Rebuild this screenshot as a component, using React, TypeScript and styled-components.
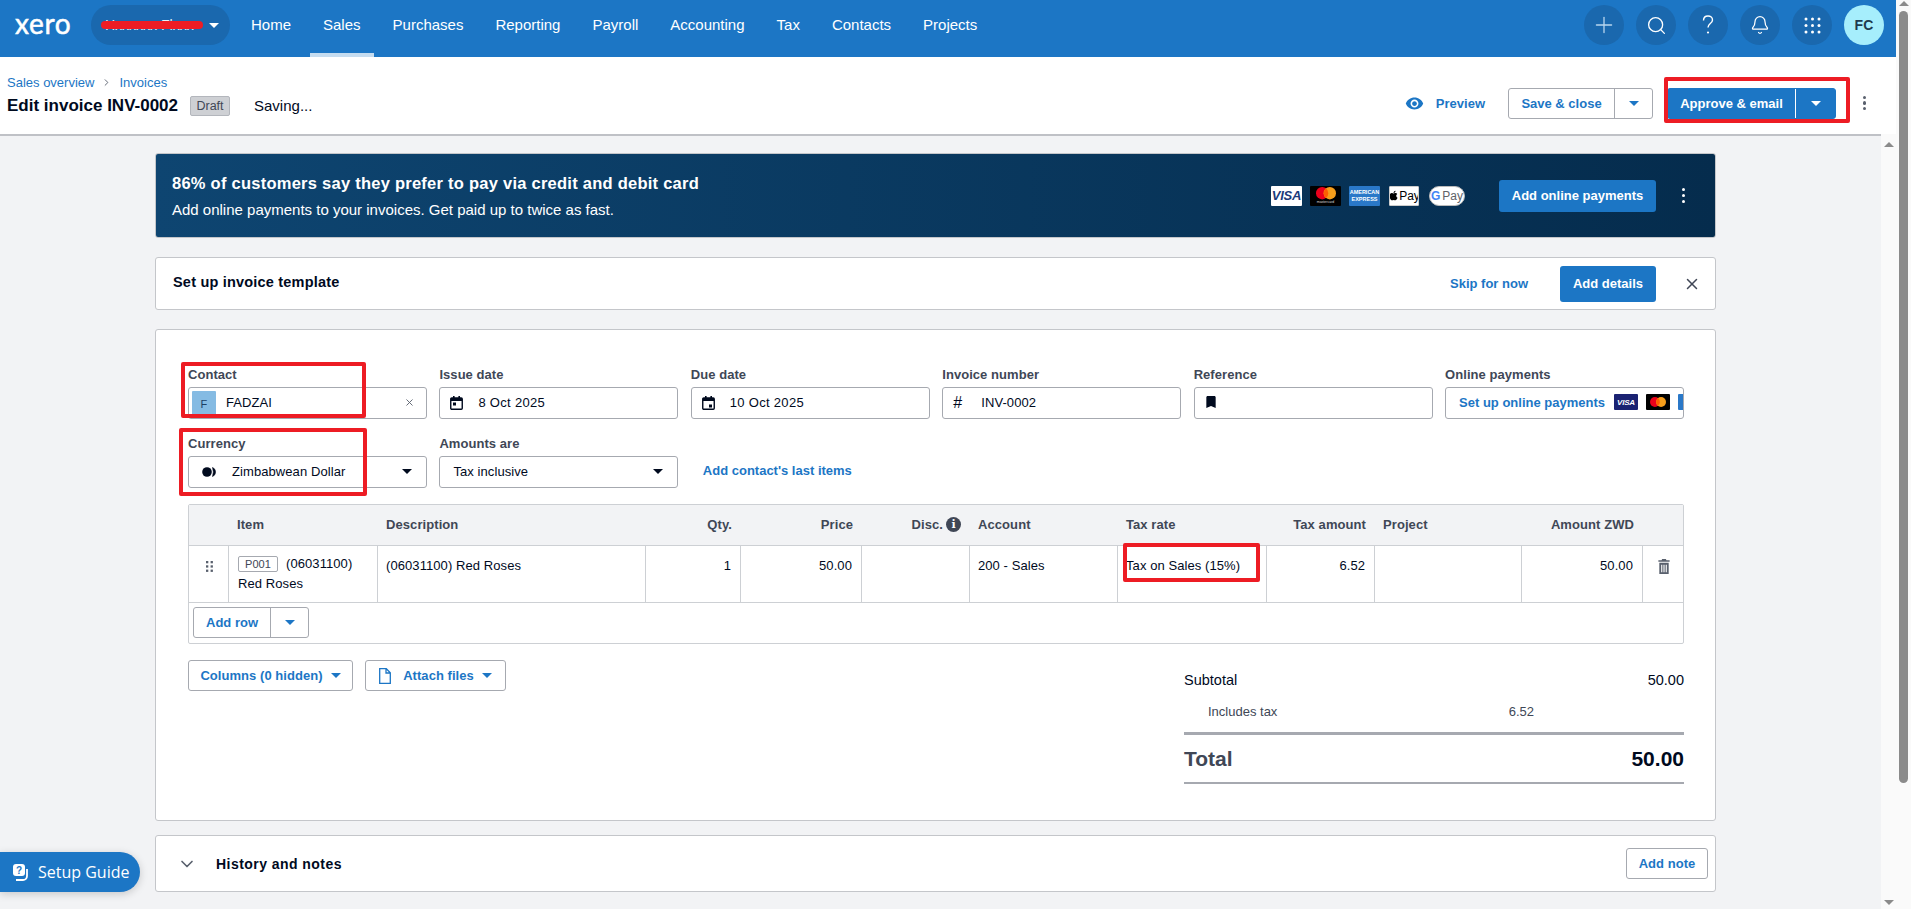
import React from "react";
import styled, { createGlobalStyle } from "styled-components";
import { Plus, Search, Bell, X, ChevronDown, ChevronRight } from "lucide-react";
import { MdVisibility, MdBookmark } from "react-icons/md";
import { FaApple } from "react-icons/fa";

const BLUE = "#1c76c5";
const BORDER = "#a6a9b0";
const LINE = "#cdd0d4";
const INK = "#000a1e";
const LABEL = "#404756";

const Global = createGlobalStyle`
  html, body { margin: 0; padding: 0; height: 909px; overflow: hidden; background: #fff; }
  * { box-sizing: border-box; }
  body { font-family: "Liberation Sans", Arial, sans-serif; font-size: 13px; color: ${INK}; letter-spacing: .08px; }
`;

const Shell = styled.div`position: relative; display: flex; width: 1911px; height: 909px; overflow: hidden;`;
const PageColumn = styled.div`width: 1896px; display: flex; flex-direction: column;`;
const OuterBar = styled.div`width: 15px; background: #fafafa; display: flex; flex-direction: column; align-items: center;`;
const OuterThumb = styled.div`width: 9px; height: 772px; margin-top: 5px; border-radius: 5px; background: #8b8b8b;`;
const ArrowUp = styled.div`width: 0; height: 0; margin-top: ${p => p.$top ?? 0}px; border-left: 5px solid transparent; border-right: 5px solid transparent; border-bottom: 5px solid #8b8b8b;`;
const ArrowDown = styled.div`width: 0; height: 0; margin-bottom: 4px; border-left: 5px solid transparent; border-right: 5px solid transparent; border-top: 5px solid #8b8b8b;`;

const TopBar = styled.header`height: 57px; background: ${BLUE}; display: flex; align-items: flex-start; padding-left: 15px; color: #fff;`;
const Logo = styled.div`width: 76px; height: 50px; font-family: Lato, sans-serif; font-size: 28px; font-weight: 400; line-height: 46px; letter-spacing: .7px; -webkit-text-stroke: .5px #fff;`;
const OrgPill = styled.div`position: relative; width: 139px; height: 40px; margin-top: 5px; border-radius: 20px; background: #1a68ae; display: flex; align-items: center; justify-content: space-between; padding: 0 11px; font-size: 14px; letter-spacing: 0;`;
const Nav = styled.nav`display: flex; gap: 6px; margin-left: 8px; height: 57px;`;
const NavItem = styled.a`height: 57px; padding: 0 13px; line-height: 50px; font-size: 15px; letter-spacing: 0; color: #fff; border-bottom: 4px solid ${p => (p.$active ? "#c5dcf0" : "transparent")};`;
const TopActions = styled.div`margin-left: auto; margin-right: 12px; margin-top: 5px; display: flex; gap: 12px;`;
const RoundBtn = styled.div`width: 40px; height: 40px; border-radius: 50%; background: #1a68ae; display: flex; align-items: center; justify-content: center; color: #fff;`;
const Avatar = styled(RoundBtn)`background: #a6eefc; color: #1f3a4d; font-weight: 700; font-size: 14px;`;

const TitleBar = styled.div`height: 77px; background: #fff; display: flex; justify-content: space-between; padding: 0 29px 0 7px;`;
const TitleLeft = styled.div`display: flex; flex-direction: column; padding-top: 17px;`;
const Crumbs = styled.div`display: flex; align-items: center; gap: 7px; height: 16px; color: ${BLUE}; font-size: 13px; letter-spacing: 0;`;
const TitleRow = styled.div`display: flex; align-items: center; margin-top: 4px; height: 24px;`;
const Title = styled.h1`margin: 0; font-size: 17px; font-weight: 700; letter-spacing: 0; color: ${INK};`;
const StatusBadge = styled.span`margin-left: 12px; height: 20px; width: 40px; border-radius: 2px; border: 1px solid #b3b6bc; background: #ced0d4; color: ${LABEL}; font-size: 12.5px; letter-spacing: 0; display: flex; align-items: center; justify-content: center;`;
const Saving = styled.span`margin: -2px 0 0 24px; font-size: 15px; letter-spacing: 0;`;
const TitleRight = styled.div`display: flex; align-items: center; padding-top: 15px; height: 77px;`;
const PreviewLink = styled.a`display: flex; align-items: center; gap: 12px; color: ${BLUE}; font-weight: 700; font-size: 13px; margin-right: 23px; letter-spacing: 0;`;
const KebabBtn = styled.div`color: ${p => (p.$light ? "#fff" : "#59606d")}; width: 4px; display: flex; flex-direction: column; gap: 2.5px; margin-left: ${p => p.$ml ?? 26}px;`;
const Dot = styled.i`display: block; width: 3.2px; height: 3.2px; border-radius: 50%; background: currentColor;`;

const Split = styled.div`display: inline-flex; height: 31px; border-radius: 3px; border: 1px solid ${p => (p.$primary ? BLUE : BORDER)}; background: ${p => (p.$primary ? BLUE : "#fff")}; color: ${p => (p.$primary ? "#fff" : BLUE)}; font-weight: 700; font-size: 13px; letter-spacing: 0; margin-left: ${p => p.$ml ?? 0}px;`;
const SplitLabel = styled.div`width: ${p => p.$w}px; display: flex; align-items: center; justify-content: center;`;
const SplitCaret = styled.div`width: ${p => p.$w}px; display: flex; align-items: center; justify-content: center; border-left: 1px solid ${p => (p.$primary ? "#fff" : BORDER)};`;
const Caret = styled.i`display: inline-block; width: 0; height: 0; border-left: 5px solid transparent; border-right: 5px solid transparent; border-top: 5px solid ${p => p.$c ?? "currentColor"};`;

const Body = styled.div`flex: 1; display: flex; min-height: 0;`;
const Scroller = styled.main`width: 1881px; background: #f2f3f5; border-top: 2px solid #bfc1c6; padding: 17px 165px 0 155px; display: flex; flex-direction: column;`;
const InnerBar = styled.div`width: 15px; background: #fafafa; display: flex; flex-direction: column; align-items: center; justify-content: space-between; padding-top: 8px;`;

const Banner = styled.section`height: 85px; border-radius: 3px; background: linear-gradient(90deg, #0e4571 0%, #052c4d 100%); color: #fff; display: flex; align-items: center; padding: 0 29px 0 16px; border: 1px solid #c4c6ca;`;
const BannerText = styled.div`flex: 1; display: flex; flex-direction: column; gap: 10px;`;
const BannerTitle = styled.div`font-size: 16.5px; font-weight: 700; line-height: 18px; letter-spacing: .25px;`;
const BannerSub = styled.div`font-size: 15px; line-height: 16px; letter-spacing: 0;`;
const CardRow = styled.div`display: flex; align-items: center; gap: ${p => p.$gap ?? 8}px; margin-right: ${p => p.$mr ?? 34}px;`;
const CardBox = styled.div`width: ${p => p.$w ?? 31}px; height: ${p => p.$h ?? 20}px; margin-left: ${p => p.$ml ?? 0}px; flex: none; border-radius: ${p => p.$r ?? 1}px; background: ${p => p.$bg}; color: ${p => p.$c ?? "#fff"}; border: ${p => (p.$b ? `1px solid ${p.$b}` : "none")}; display: flex; flex-direction: column; align-items: center; justify-content: center; overflow: hidden; font-family: "Liberation Sans", sans-serif; letter-spacing: 0;`;
const VisaText = styled.span`font-size: ${p => p.$s ?? 13}px; font-weight: 700; font-style: italic; letter-spacing: -.2px;`;
const AmexText = styled.span`font-size: 5.5px; font-weight: 700; line-height: 7px; text-align: center; white-space: normal;`;
const McCaption = styled.span`font-size: 3.5px; line-height: 4px; color: #ddd;`;
const PayText = styled.span`font-size: 12px; display: flex; align-items: center; color: ${p => p.$c ?? "#000"};`;
const GLetter = styled.b`color: #4285f4; font-size: 12px; margin-right: 2px;`;
const PrimaryBtn = styled.button`height: ${p => p.$h}px; width: ${p => p.$w}px; flex: none; border: none; border-radius: 3px; background: ${BLUE}; color: #fff; font: 700 13px "Liberation Sans", sans-serif; letter-spacing: 0;`;

const TemplateCard = styled.section`height: 53px; margin-top: 19px; background: #fff; border: 1px solid #c4c6ca; border-radius: 3px; display: flex; align-items: center; padding: 0 14px 0 17px;`;
const CardTitle = styled.div`flex: 1; margin-top: -3px; font-size: 14.5px; font-weight: 700; letter-spacing: .2px;`;
const SkipLink = styled.a`color: ${BLUE}; font-weight: 700; font-size: 13px; margin-right: 32px; letter-spacing: 0;`;
const CloseBtn = styled.div`margin-left: 27px; color: #404756; display: flex;`;

const MainCard = styled.section`height: 492px; margin-top: 19px; background: #fff; border: 1px solid #c4c6ca; border-radius: 3px; padding: 36px 31px 0 32px;`;
const FormGrid = styled.div`display: grid; grid-template-columns: repeat(6, 1fr); column-gap: 12.5px; row-gap: 16px;`;
const FieldWrap = styled.div`display: flex; flex-direction: column; gap: 5px; min-width: 0;`;
const Label = styled.label`font-size: 13px; font-weight: 700; height: 16px; line-height: 18px; color: ${LABEL}; letter-spacing: .05px;`;
const Field = styled.div`height: 32px; border: 1px solid ${BORDER}; border-radius: 3px; background: #fff; display: flex; align-items: center; padding: 0 ${p => p.$pr ?? 14}px 2px ${p => p.$pl ?? 10}px; overflow: hidden; white-space: nowrap;`;
const IconSlot = styled.div`width: ${p => p.$w ?? 28}px; flex: none; display: flex; align-items: center; padding-top: 2px;`;
const FieldText = styled.span`flex: 1; min-width: 0; letter-spacing: ${p => p.$ls ?? 0.08}px;`;
const ContactChip = styled.div`width: 24px; height: 26px; margin-right: 10px; align-self: flex-start; margin-top: 3px; background: #85bbe3; color: #1c3f63; font-size: 11px; display: flex; align-items: center; justify-content: center; border-radius: 1px; flex: none;`;
const HashGlyph = styled.span`font-size: 16px; font-weight: 400; line-height: 1;`;
const OnlineLink = styled.span`color: ${BLUE}; font-weight: 700; font-size: 13px; margin-right: 9px; letter-spacing: 0;`;
const InlineLink = styled.a`align-self: end; height: 32px; line-height: 30px; color: ${BLUE}; font-weight: 700; margin-left: 12px; white-space: nowrap; font-size: 13px; letter-spacing: 0; grid-column: span 4;`;

const ItemsTable = styled.div`margin-top: 16px; border: 1px solid ${LINE}; border-radius: 2px; height: 140px;`;
const ItemsGrid = styled.div`display: grid; grid-template-columns: 40px 149px 268px 95px 121px 108px 148px 149px 108px 147px 121px 1fr; grid-template-rows: 41px 57px;`;
const HeadCell = styled.div`background: #f2f3f5; border-bottom: 1px solid ${LINE}; font-weight: 700; color: ${LABEL}; padding: 0 9px 2px 8px; display: flex; align-items: center; justify-content: ${p => (p.$right ? "flex-end" : "flex-start")}; gap: 3px; white-space: nowrap;`;
const Cell = styled.div`border-right: 1px solid ${LINE}; border-bottom: 1px solid ${LINE}; padding: 12px 9px 0 8px; text-align: ${p => (p.$right ? "right" : "left")}; white-space: nowrap; line-height: 16px;`;
const ItemCell = styled(Cell)`padding: 10px 9px 0;`;
const DragCell = styled(Cell)`padding: 15px 0 0 17px;`;
const TrashCell = styled(Cell)`padding: 13px 0 0 15px; border-right: none;`;
const ItemCode = styled.span`display: inline-block; height: 16px; width: 40px; margin-right: 8px; border: 1px solid ${BORDER}; border-radius: 2px; color: ${LABEL}; font-size: 11px; line-height: 14px; text-align: center;`;
const ItemSecond = styled.div`margin-top: 4px;`;
const InfoIcon = styled.span`width: 15px; height: 15px; border-radius: 50%; background: ${LABEL}; color: #fff; font: 700 11px/15px "DejaVu Serif", serif; text-align: center; letter-spacing: 0;`;
const TableFoot = styled.div`padding: 4px 0 0 4px;`;

const BottomRow = styled.div`margin-top: 16px; display: flex; justify-content: space-between; align-items: flex-start;`;
const Actions = styled.div`display: flex; gap: 12px;`;
const OutlineBtn = styled.div`height: 31px; width: ${p => p.$w}px; border: 1px solid ${BORDER}; border-radius: 3px; background: #fff; color: ${BLUE}; font-weight: 700; font-size: 13px; display: flex; align-items: center; justify-content: center; gap: 8px; letter-spacing: .05px; flex: none;`;
const DocIcon = styled.svg`margin-right: 4px;`;

const Totals = styled.div`width: 500px; padding-top: 10px;`;
const SubRow = styled.div`height: 20px; display: flex; justify-content: space-between; align-items: center; font-size: 14.5px; letter-spacing: 0;`;
const TaxRow = styled.div`height: 20px; margin-top: 11px; padding: 0 150px 0 24px; display: flex; justify-content: space-between; align-items: center; font-size: 13px; letter-spacing: 0; color: ${LABEL};`;
const GrandRow = styled.div`height: 52px; margin-top: 11px; border-top: 3px solid ${BORDER}; border-bottom: 2px solid ${BORDER}; display: flex; justify-content: space-between; align-items: center; font-size: 21px; font-weight: 700; letter-spacing: 0;`;
const TotalLabel = styled.span`color: ${LABEL};`;

const HistoryCard = styled.section`height: 57px; margin-top: 14px; background: #fff; border: 1px solid #c4c6ca; border-radius: 3px; display: flex; align-items: center; padding: 0 7px 0 21px;`;
const HistoryTitle = styled.div`flex: 1; margin-left: 19px; font-size: 14px; font-weight: 700; letter-spacing: .45px;`;
const Chevron = styled.div`color: #59606d; display: flex;`;

const SetupGuide = styled.div`position: absolute; left: 0; top: 852px; width: 140px; height: 40px; border-radius: 0 20px 20px 0; background: ${BLUE}; color: #fff; font-family: "Open Sans", "Noto Sans", sans-serif; font-size: 16px; letter-spacing: 0; display: flex; align-items: center; gap: 9px; padding-left: 12px; white-space: nowrap; box-shadow: 0 2px 8px rgba(0,0,0,.18);`;
const Annotation = styled.div`position: absolute; left: ${p => p.$l}px; top: ${p => p.$t}px; width: ${p => p.$w}px; height: ${p => p.$h}px; border: 4px solid #ed1c24; border-radius: 2px; pointer-events: none;`;
const Scribble = styled.div`position: absolute; left: 10px; right: 27px; top: 16px; height: 8px; border-radius: 4px; background: #ed1c24;`;
const OrgName = styled.span`opacity: .9; white-space: nowrap; margin-left: 3px;`;

const HelpIcon = () => (
  <svg width="12" height="20" viewBox="0 0 12 20" fill="none" stroke="#fff" strokeWidth="1.4">
    <path d="M1.5 5.5C1.5 2.8 3.4 1 6 1s4.5 1.7 4.5 4c0 3.6-4.5 3.6-4.5 7.5" />
    <circle cx="6" cy="17.5" r="1.1" fill="#fff" stroke="none" />
  </svg>
);
const GridIcon = () => (
  <svg width="17" height="17" viewBox="0 0 17 17" fill="#fff">
    {[2, 8.5, 15].flatMap(y => [2, 8.5, 15].map(x => <circle key={`${x}-${y}`} cx={x} cy={y} r="1.5" />))}
  </svg>
);
const CalIcon = ({ due }: { due?: boolean }) => (
  <svg width="13" height="14" viewBox="0 0 13 14" fill="none">
    <rect x=".75" y="2" width="11.5" height="11.2" rx="1" stroke={INK} strokeWidth="1.4" />
    <rect x="1" y="2" width="11" height="3" fill={INK} />
    <rect x="3" y="0" width="1.6" height="3" fill={INK} />
    <rect x="8.4" y="0" width="1.6" height="3" fill={INK} />
    <rect x={due ? 7 : 3} y={due ? 8.5 : 6.5} width="3" height="3" fill={INK} />
  </svg>
);
const FlagIcon = () => (
  <svg width="15" height="10" viewBox="0 0 15 10" fill={INK}>
    <circle cx="5" cy="5" r="4.8" />
    <path d="M10.5 .4a5 5 0 0 1 0 9.2q1.8-4.6 0-9.2z" stroke={INK} strokeWidth=".6" />
  </svg>
);
const DragIcon = () => (
  <svg width="7" height="11" viewBox="0 0 7 11" fill="#59606d" style={{ display: "block" }}>
    {[0, 4.3, 8.6].flatMap(y => [0, 4.6].map(x => <rect key={`${x}-${y}`} x={x} y={y} width="2.3" height="2.3" />))}
  </svg>
);
const TrashIcon = () => (
  <svg width="12" height="15" viewBox="0 0 12 16" fill="#59606d" style={{ display: "block" }}>
    <path d="M4 0h4l.6 1.4H12V3H0V1.4h3.4z" />
    <path fillRule="evenodd" d="M1 4h10v12H1zM3 6v8h1.2V6zM5.4 6v8h1.2V6zM7.8 6v8H9V6z" />
  </svg>
);
const GuideIcon = () => (
  <svg width="17" height="17" viewBox="0 0 17 17">
    <rect x="1" y="0" width="12" height="12" rx="3" fill="#fff" />
    <path d="M15 5v7a4 4 0 0 1-4 4H4" stroke="#fff" strokeWidth="1.8" fill="none" />
    <text x="7" y="10" textAnchor="middle" fontSize="10" fontWeight="700" fill={BLUE} fontFamily="Liberation Sans">?</text>
  </svg>
);
const McIcon = ({ s }: { s: number }) => (
  <svg width={s} height={s * 0.62} viewBox="0 0 21 13">
    <circle cx="6.5" cy="6.5" r="6.5" fill="#eb001b" />
    <circle cx="14.5" cy="6.5" r="6.5" fill="#f79e1b" />
    <path d="M10.5 1.4a6.5 6.5 0 0 1 0 10.2 6.5 6.5 0 0 1 0-10.2z" fill="#ff5f00" />
  </svg>
);

const navItems = ["Home", "Sales", "Purchases", "Reporting", "Payroll", "Accounting", "Tax", "Contacts", "Projects"];

export default function App() {
  return (
    <Shell>
      <Global />
      <PageColumn>
        <TopBar>
          <Logo>xero</Logo>
          <OrgPill>
            <OrgName>Hxxxxxx Flxxx</OrgName>
            <Scribble />
            <Caret $c="#fff" />
          </OrgPill>
          <Nav>
            {navItems.map(n => (
              <NavItem key={n} $active={n === "Sales"}>{n}</NavItem>
            ))}
          </Nav>
          <TopActions>
            <RoundBtn><Plus size={26} strokeWidth={1.2} color="#b9d6ee" /></RoundBtn>
            <RoundBtn><Search size={21} strokeWidth={1.5} /></RoundBtn>
            <RoundBtn><HelpIcon /></RoundBtn>
            <RoundBtn><Bell size={20} strokeWidth={1.5} /></RoundBtn>
            <RoundBtn><GridIcon /></RoundBtn>
            <Avatar>FC</Avatar>
          </TopActions>
        </TopBar>
        <TitleBar>
          <TitleLeft>
            <Crumbs>Sales overview <ChevronRight size={11} color="#59606d" /> Invoices</Crumbs>
            <TitleRow>
              <Title>Edit invoice INV-0002</Title>
              <StatusBadge>Draft</StatusBadge>
              <Saving>Saving...</Saving>
            </TitleRow>
          </TitleLeft>
          <TitleRight>
            <PreviewLink><MdVisibility size={19} />Preview</PreviewLink>
            <Split>
              <SplitLabel $w={105}>Save &amp; close</SplitLabel>
              <SplitCaret $w={38}><Caret /></SplitCaret>
            </Split>
            <Split $primary $ml={14}>
              <SplitLabel $w={127}>Approve &amp; email</SplitLabel>
              <SplitCaret $primary $w={40}><Caret /></SplitCaret>
            </Split>
            <KebabBtn $ml={27}><Dot /><Dot /><Dot /></KebabBtn>
          </TitleRight>
        </TitleBar>
        <Body>
          <Scroller>
            <Banner>
              <BannerText>
                <BannerTitle>86% of customers say they prefer to pay via credit and debit card</BannerTitle>
                <BannerSub>Add online payments to your invoices. Get paid up to twice as fast.</BannerSub>
              </BannerText>
              <CardRow>
                <CardBox $bg="#fff" $c="#1a3a7a"><VisaText>VISA</VisaText></CardBox>
                <CardBox $bg="#000"><McIcon s={20} /><McCaption>mastercard</McCaption></CardBox>
                <CardBox $bg="#2a78c8"><AmexText>AMERICAN EXPRESS</AmexText></CardBox>
                <CardBox $bg="#fff" $b="#ccc" $w={30} $ml={1}><PayText><FaApple size={11} />Pay</PayText></CardBox>
                <CardBox $bg="#fff" $b="#bbb" $w={36} $r={10} $ml={2}><PayText $c="#5f6368"><GLetter>G</GLetter>Pay</PayText></CardBox>
              </CardRow>
              <PrimaryBtn $w={157} $h={32}>Add online payments</PrimaryBtn>
              <KebabBtn $light><Dot /><Dot /><Dot /></KebabBtn>
            </Banner>
            <TemplateCard>
              <CardTitle>Set up invoice template</CardTitle>
              <SkipLink>Skip for now</SkipLink>
              <PrimaryBtn $w={96} $h={36}>Add details</PrimaryBtn>
              <CloseBtn><X size={18} strokeWidth={2} /></CloseBtn>
            </TemplateCard>
            <MainCard>
              <FormGrid>
                <FieldWrap>
                  <Label>Contact</Label>
                  <Field $pl={3} $pr={11}>
                    <ContactChip>F</ContactChip>
                    <FieldText>FADZAI</FieldText>
                    <X size={11} color="#59606d" />
                  </Field>
                </FieldWrap>
                <FieldWrap>
                  <Label>Issue date</Label>
                  <Field><IconSlot><CalIcon /></IconSlot><FieldText $ls={0.3}>8 Oct 2025</FieldText></Field>
                </FieldWrap>
                <FieldWrap>
                  <Label>Due date</Label>
                  <Field><IconSlot><CalIcon due /></IconSlot><FieldText $ls={0.3}>10 Oct 2025</FieldText></Field>
                </FieldWrap>
                <FieldWrap>
                  <Label>Invoice number</Label>
                  <Field><IconSlot><HashGlyph>#</HashGlyph></IconSlot><FieldText>INV-0002</FieldText></Field>
                </FieldWrap>
                <FieldWrap>
                  <Label>Reference</Label>
                  <Field $pl={8}><MdBookmark size={16} /></Field>
                </FieldWrap>
                <FieldWrap>
                  <Label>Online payments</Label>
                  <Field $pl={13} $pr={0}>
                    <OnlineLink>Set up online payments</OnlineLink>
                    <CardRow $gap={8} $mr={0}>
                      <CardBox $bg="#1a2272" $w={24} $h={16}><VisaText $s={8}>VISA</VisaText></CardBox>
                      <CardBox $bg="#000" $w={24} $h={16}><McIcon s={16} /></CardBox>
                      <CardBox $bg="#2a78c8" $w={24} $h={16} />
                    </CardRow>
                  </Field>
                </FieldWrap>
                <FieldWrap>
                  <Label>Currency</Label>
                  <Field $pl={13} $pr={14}>
                    <IconSlot $w={30}><FlagIcon /></IconSlot>
                    <FieldText>Zimbabwean Dollar</FieldText>
                    <Caret $c={INK} />
                  </Field>
                </FieldWrap>
                <FieldWrap>
                  <Label>Amounts are</Label>
                  <Field $pl={13} $pr={14}>
                    <FieldText>Tax inclusive</FieldText>
                    <Caret $c={INK} />
                  </Field>
                </FieldWrap>
                <InlineLink>Add contact's last items</InlineLink>
              </FormGrid>
              <ItemsTable>
                <ItemsGrid>
                  <HeadCell />
                  <HeadCell>Item</HeadCell>
                  <HeadCell>Description</HeadCell>
                  <HeadCell $right>Qty.</HeadCell>
                  <HeadCell $right>Price</HeadCell>
                  <HeadCell $right>Disc. <InfoIcon>i</InfoIcon></HeadCell>
                  <HeadCell>Account</HeadCell>
                  <HeadCell>Tax rate</HeadCell>
                  <HeadCell $right>Tax amount</HeadCell>
                  <HeadCell>Project</HeadCell>
                  <HeadCell $right>Amount ZWD</HeadCell>
                  <HeadCell />
                  <DragCell><DragIcon /></DragCell>
                  <ItemCell>
                    <ItemCode>P001</ItemCode>(06031100)
                    <ItemSecond>Red Roses</ItemSecond>
                  </ItemCell>
                  <Cell>(06031100) Red Roses</Cell>
                  <Cell $right>1</Cell>
                  <Cell $right>50.00</Cell>
                  <Cell />
                  <Cell>200 - Sales</Cell>
                  <Cell>Tax on Sales (15%)</Cell>
                  <Cell $right>6.52</Cell>
                  <Cell />
                  <Cell $right>50.00</Cell>
                  <TrashCell><TrashIcon /></TrashCell>
                </ItemsGrid>
                <TableFoot>
                  <Split>
                    <SplitLabel $w={76}>Add row</SplitLabel>
                    <SplitCaret $w={38}><Caret /></SplitCaret>
                  </Split>
                </TableFoot>
              </ItemsTable>
              <BottomRow>
                <Actions>
                  <OutlineBtn $w={165}>Columns (0 hidden) <Caret /></OutlineBtn>
                  <OutlineBtn $w={141}>
                    <DocIcon width="12" height="16" viewBox="0 0 12 16" fill="none" stroke={BLUE} strokeWidth="1.3">
                      <path d="M.7.7h6.6l4 4v10.6H.7zM7 .7v4.3h4.3" />
                    </DocIcon>
                    Attach files <Caret />
                  </OutlineBtn>
                </Actions>
                <Totals>
                  <SubRow><span>Subtotal</span><span>50.00</span></SubRow>
                  <TaxRow><span>Includes tax</span><span>6.52</span></TaxRow>
                  <GrandRow><TotalLabel>Total</TotalLabel><span>50.00</span></GrandRow>
                </Totals>
              </BottomRow>
            </MainCard>
            <HistoryCard>
              <Chevron><ChevronDown size={20} strokeWidth={2} /></Chevron>
              <HistoryTitle>History and notes</HistoryTitle>
              <OutlineBtn $w={82}>Add note</OutlineBtn>
            </HistoryCard>
          </Scroller>
          <InnerBar>
            <ArrowUp />
            <ArrowDown />
          </InnerBar>
        </Body>
      </PageColumn>
      <OuterBar>
        <ArrowUp $top={1} />
        <OuterThumb />
      </OuterBar>
      <SetupGuide><GuideIcon />Setup Guide</SetupGuide>
      <Annotation $l={1664} $t={77} $w={186} $h={46} />
      <Annotation $l={181} $t={362} $w={185} $h={56} />
      <Annotation $l={179} $t={428} $w={188} $h={68} />
      <Annotation $l={1123} $t={543} $w={137} $h={39} />
    </Shell>
  );
}
